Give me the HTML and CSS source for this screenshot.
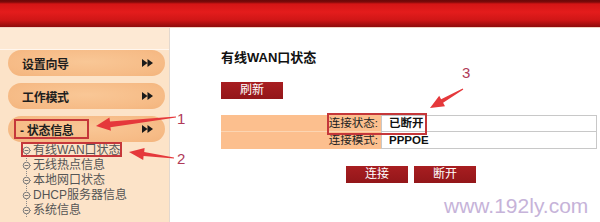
FILE: index.html
```html
<!DOCTYPE html>
<html lang="zh-CN">
<head>
<meta charset="utf-8">
<title>有线WAN口状态</title>
<link rel="stylesheet" href="styles.css">
</head>
<body>
<div class="page">
  <header class="topbar"></header>
  <div class="main">
    <aside class="side">
      <div class="side-head"></div>
      <nav class="menu">
        <div class="pill"><span class="pill-text">设置向导</span><svg class="dbl" width="11" height="8" viewBox="0 0 11 8"><path d="M0 0L5.5 4L0 8Z M5.5 0L11 4L5.5 8Z" fill="#1a1a1a"/></svg></div>
        <div class="pill"><span class="pill-text">工作模式</span><svg class="dbl" width="11" height="8" viewBox="0 0 11 8"><path d="M0 0L5.5 4L0 8Z M5.5 0L11 4L5.5 8Z" fill="#1a1a1a"/></svg></div>
        <div class="pill pill-open"><span class="pill-text">- 状态信息</span><svg class="dbl" width="11" height="8" viewBox="0 0 11 8"><path d="M0 0L5.5 4L0 8Z M5.5 0L11 4L5.5 8Z" fill="#1a1a1a"/></svg></div>
        <ul class="sub">
          <li class="sub-item"><svg class="node" width="10" height="15" viewBox="0 0 10 15"><path d="M4.5 11V15" stroke="#8a8a8a" stroke-dasharray="1 1"/><circle cx="4.5" cy="7.5" r="3.3" fill="none" stroke="#7a7a7a"/><path d="M2.6 7.5H6.4" stroke="#7a7a7a"/><path d="M8 7.5H10" stroke="#8a8a8a" stroke-dasharray="1 1"/></svg>有线WAN口状态</li>
          <li class="sub-item"><svg class="node" width="10" height="15" viewBox="0 0 10 15"><path d="M4.5 0V4M4.5 11V15" stroke="#8a8a8a" stroke-dasharray="1 1"/><circle cx="4.5" cy="7.5" r="3.3" fill="none" stroke="#7a7a7a"/><path d="M2.6 7.5H6.4" stroke="#7a7a7a"/><path d="M8 7.5H10" stroke="#8a8a8a" stroke-dasharray="1 1"/></svg>无线热点信息</li>
          <li class="sub-item"><svg class="node" width="10" height="15" viewBox="0 0 10 15"><path d="M4.5 0V4M4.5 11V15" stroke="#8a8a8a" stroke-dasharray="1 1"/><circle cx="4.5" cy="7.5" r="3.3" fill="none" stroke="#7a7a7a"/><path d="M2.6 7.5H6.4" stroke="#7a7a7a"/><path d="M8 7.5H10" stroke="#8a8a8a" stroke-dasharray="1 1"/></svg>本地网口状态</li>
          <li class="sub-item"><svg class="node" width="10" height="15" viewBox="0 0 10 15"><path d="M4.5 0V4M4.5 11V15" stroke="#8a8a8a" stroke-dasharray="1 1"/><circle cx="4.5" cy="7.5" r="3.3" fill="none" stroke="#7a7a7a"/><path d="M2.6 7.5H6.4" stroke="#7a7a7a"/><path d="M8 7.5H10" stroke="#8a8a8a" stroke-dasharray="1 1"/></svg>DHCP服务器信息</li>
          <li class="sub-item"><svg class="node" width="10" height="15" viewBox="0 0 10 15"><path d="M4.5 0V4M4.5 11V15" stroke="#8a8a8a" stroke-dasharray="1 1"/><circle cx="4.5" cy="7.5" r="3.3" fill="none" stroke="#7a7a7a"/><path d="M2.6 7.5H6.4" stroke="#7a7a7a"/><path d="M8 7.5H10" stroke="#8a8a8a" stroke-dasharray="1 1"/></svg>系统信息</li>
        </ul>
      </nav>
    </aside>
    <section class="content">
      <h1 class="title">有线WAN口状态</h1>
      <button class="btn btn-refresh">刷新</button>
      <div class="stat">
        <div class="stat-row"><div class="stat-lab">连接状态:</div><div class="stat-val">已断开</div></div>
        <div class="stat-row"><div class="stat-lab">连接模式:</div><div class="stat-val">PPPOE</div></div>
      </div>
      <div class="actions">
        <button class="btn btn-act">连接</button>
        <button class="btn btn-act">断开</button>
      </div>
    </section>
  </div>
  <svg class="annot" width="600" height="222" viewBox="0 0 600 222">
    <rect x="15" y="120" width="73" height="18" fill="none" stroke="#c5373a" stroke-width="2"/>
    <rect x="22" y="143" width="99" height="13" fill="none" stroke="#c5373a" stroke-width="2"/>
    <rect x="328" y="114" width="98" height="20" fill="none" stroke="#c5373a" stroke-width="2"/>
    <polygon points="176,116.4 110,121.6 109.4,117.6 96,126 111,130.8 110.4,127.2 176,117.6" fill="#e5383b"/>
    <polygon points="174,157.4 144.2,152 144.6,148 129,152 143.2,160 143.6,156 174,158.6" fill="#e5383b"/>
    <polygon points="462.7,88.5 441.1,99.3 439.2,95.8 430,108 445,106.2 443.1,102.7 463.3,89.5" fill="#e5383b"/>
    <text class="num" x="177" y="124">1</text>
    <text class="num" x="177" y="164">2</text>
    <text class="num" x="462" y="78">3</text>
  </svg>
  <div class="watermark">www.192ly.com</div>
</div>
</body>
</html>
```

FILE: styles.css
```css
html, body {
  margin: 0;
  padding: 0;
  background: #ffffff;
}

.page {
  position: relative;
  width: 600px;
  height: 222px;
  overflow: hidden;
  font-family: "Liberation Sans", "Noto Sans CJK SC", sans-serif;
  color: #222;
}

.topbar {
  height: 27px;
  border-bottom: 1px solid #f2d2c4;
  background: linear-gradient(to bottom, #6a0808 0px, #7c0a0a 2px, #d41515 4px, #e41c1c 12px, #d01616 20px, #8e0c0c 27px);
}

.main {
  display: flex;
  height: 194px;
}

.side {
  width: 169px;
  flex: none;
  background: #fce3c8;
  border-right: 1px solid #e2d8cf;
}

.side-head {
  height: 21px;
  background: #fde9d4;
  border-bottom: 1px solid #fff6ee;
}

.menu {
  display: flex;
  flex-direction: column;
  gap: 7px;
  padding-top: 0;
}

.pill {
  margin-left: 8px;
  width: 157px;
  height: 26px;
  border-radius: 13px;
  background: radial-gradient(ellipse at 50% 45%, #f9c796 0%, #f6bb86 70%, #f3b47d 100%);
  display: flex;
  align-items: center;
  box-sizing: border-box;
  padding-left: 14px;
  padding-right: 12px;
}

.pill-open {
  padding-left: 12px;
}

.pill-text {
  flex: 1;
  font-size: 12px;
  font-weight: bold;
  color: #1e1e1e;
  letter-spacing: -0.3px;
}

.dbl {
  display: block;
}

.sub {
  list-style: none;
  margin: -6px 0 0 0;
  padding: 0 0 0 22px;
}

.sub-item {
  display: flex;
  align-items: center;
  height: 15px;
  font-size: 12px;
  color: #555;
  line-height: 15px;
  white-space: nowrap;
}

.node {
  display: block;
  margin-right: 1px;
}

.content {
  flex: 1;
  padding-left: 51px;
  padding-right: 2px;
  padding-top: 22px;
  display: flex;
  flex-direction: column;
  align-items: flex-start;
}

.title {
  margin: 0;
  font-size: 13px;
  line-height: 16px;
  font-weight: bold;
  color: #111;
}

.btn {
  border: none;
  padding: 0;
  height: 17px;
  width: 62px;
  background: linear-gradient(to bottom, #a81e21, #931619);
  color: #fff;
  font-family: "Liberation Sans", "Noto Sans CJK SC", sans-serif;
  font-size: 12px;
  line-height: 17px;
}

.btn-refresh {
  margin-top: 16px;
}

.stat {
  margin-top: 16px;
  width: 376px;
  font-size: 11.5px;
}

.stat-row {
  display: flex;
  height: 17px;
}

.stat-lab {
  width: 160px;
  box-sizing: border-box;
  background: #fcbf8e;
  text-align: right;
  padding-right: 3px;
  line-height: 17px;
  color: #222;
}

.stat-row:first-child .stat-lab {
  border-bottom: 1px solid #fcd5b2;
  line-height: 16px;
}

.stat-val {
  flex: 1;
  box-sizing: border-box;
  border: 1px solid #c8c8c8;
  border-top: none;
  padding-left: 7px;
  font-weight: bold;
  color: #111;
  line-height: 16px;
}

.stat-row:first-child .stat-val {
  border-top: 1px solid #c8c8c8;
  line-height: 15px;
}

.actions {
  margin-top: 17px;
  width: 376px;
  display: flex;
  justify-content: center;
  gap: 6px;
  padding-left: 4px;
  box-sizing: border-box;
}

.annot {
  position: absolute;
  left: 0;
  top: 0;
  pointer-events: none;
}

.num {
  font-family: "Liberation Sans", sans-serif;
  font-size: 15px;
  fill: #b03a58;
}

.watermark {
  position: absolute;
  left: 444px;
  top: 195px;
  font-family: "Liberation Sans", sans-serif;
  font-size: 21px;
  line-height: 21px;
  color: #c6b3d9;
  white-space: nowrap;
}
```
